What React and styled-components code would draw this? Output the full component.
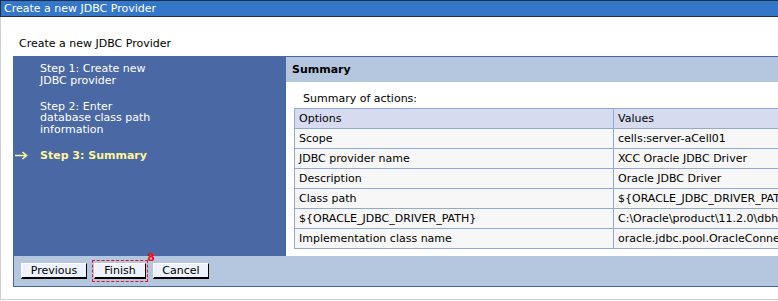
import React from 'react';
import styled, { createGlobalStyle } from 'styled-components';

const GlobalStyle = createGlobalStyle`
  html, body {
    margin: 0;
    padding: 0;
    background: #ffffff;
  }
  body {
    font-family: "DejaVu Sans", Verdana, sans-serif;
    font-size: 11px;
    color: #000000;
  }
`;

const steps = [
  { label: 'Step 1: Create new JDBC provider' },
  { label: 'Step 2: Enter database class path information' },
  { label: 'Step 3: Summary', current: true },
];

const rows = [
  ['Scope', 'cells:server-aCell01'],
  ['JDBC provider name', 'XCC Oracle JDBC Driver'],
  ['Description', 'Oracle JDBC Driver'],
  ['Class path', '${ORACLE_JDBC_DRIVER_PATH}/ojdbc6.jar'],
  ['${ORACLE_JDBC_DRIVER_PATH}', 'C:\\Oracle\\product\\11.2.0\\dbhome_1\\jdbc\\lib'],
  ['Implementation class name', 'oracle.jdbc.pool.OracleConnectionPoolDataSource'],
];

const Page = styled.div`
  width: 778px;
  height: 301px;
  overflow: hidden;
`;

const TitleBar = styled.div`
  height: 15px;
  line-height: 15px;
  padding-left: 3px;
  background: #3477c9;
  color: #ffffff;
  border: 1px solid #1d2f4a;
  border-right: none;
  white-space: nowrap;
`;

const Content = styled.div`
  height: 282px;
  border-left: 1px solid #cfcfcf;
  border-bottom: 1px solid #cfcfcf;
  padding-left: 12px;
`;

const PageHeading = styled.div`
  margin: 0 0 0 6px;
  padding-top: 20px;
  height: 19px;
  line-height: 13px;
`;

const Wizard = styled.div`
  display: flex;
  height: 200px;
  width: 900px;
`;

const StepNav = styled.div`
  width: 273px;
  flex: none;
  background: #4a69a4;
  padding-top: 7px;
  box-sizing: border-box;
  display: flex;
  flex-direction: column;
  gap: 14px;
`;

const Step = styled.div`
  display: flex;
  color: ${(p) => (p.$current ? '#fff59a' : '#ffffff')};
  font-weight: ${(p) => (p.$current ? 'bold' : 'normal')};
  line-height: 11.8px;
`;

const Marker = styled.div`
  width: 25px;
  padding-left: 2px;
  flex: none;
  display: flex;
  align-items: center;
`;

const StepLabel = styled.div`
  width: 114px;
`;

const Main = styled.div`
  flex: 1;
  background: #ffffff;
  border-top: 1px solid #4a69a4;
`;

const PanelHeader = styled.div`
  height: 25px;
  line-height: 25px;
  padding-left: 6px;
  background: #b5c7df;
  font-weight: bold;
`;

const Intro = styled.div`
  padding: 10px 0 0 17px;
  height: 16px;
  line-height: 13px;
`;

const Table = styled.table`
  margin-left: 8px;
  border-collapse: collapse;
  width: 560px;
  table-layout: fixed;
`;

const Cell = styled.td`
  border: 1px solid #8eaad9;
  height: 20px;
  padding: 0 4px;
  box-sizing: border-box;
  background: ${(p) => (p.$head ? '#d6dbef' : '#f7f7f7')};
  white-space: nowrap;
  overflow: hidden;
  width: ${(p) => (p.$first ? '319px' : 'auto')};
`;

const ButtonBar = styled.div`
  display: flex;
  align-items: center;
  gap: 5px;
  height: 31px;
  width: 900px;
  padding-left: 7px;
  box-sizing: border-box;
  background: #b5c7df;
  border-left: 1px solid #4a69a4;
  border-bottom: 1px solid #4a69a4;
`;

const Button = styled.button`
  font: inherit;
  height: 16px;
  width: ${(p) => p.$w}px;
  padding: 0;
  line-height: 13px;
  background: #eef2fd;
  color: #000000;
  border: 1px solid #ffffff;
  border-right-color: #000000;
  border-bottom: 2px solid #000000;
  border-radius: 0;
`;

const Highlight = styled.div`
  position: relative;
  padding: 2px 1px;
  border: 1px dashed #e8141e;
  display: flex;
`;

const Badge = styled.span`
  position: absolute;
  right: -8px;
  top: -9px;
  color: #f01010;
  font-weight: bold;
  font-size: 11px;
  line-height: 11px;
`;

const Arrow = () => (
  <svg width="13" height="9" viewBox="0 0 13 9">
    <path d="M0 4.5H11M7.5 1L11.5 4.5L7.5 8" fill="none" stroke="#fff59a" strokeWidth="1.6" />
  </svg>
);

export default function App() {
  return (
    <Page>
      <GlobalStyle />
      <TitleBar>Create a new JDBC Provider</TitleBar>
      <Content>
        <PageHeading>Create a new JDBC Provider</PageHeading>
        <Wizard>
          <StepNav>
            {steps.map((s) => (
              <Step key={s.label} $current={s.current}>
                <Marker>{s.current && <Arrow />}</Marker>
                <StepLabel>{s.label}</StepLabel>
              </Step>
            ))}
          </StepNav>
          <Main>
            <PanelHeader>Summary</PanelHeader>
            <Intro>Summary of actions:</Intro>
            <Table>
              <tbody>
                <tr>
                  <Cell $head $first>Options</Cell>
                  <Cell $head>Values</Cell>
                </tr>
                {rows.map(([k, v]) => (
                  <tr key={k}>
                    <Cell $first>{k}</Cell>
                    <Cell>{v}</Cell>
                  </tr>
                ))}
              </tbody>
            </Table>
          </Main>
        </Wizard>
        <ButtonBar>
          <Button $w={66}>Previous</Button>
          <Highlight>
            <Button $w={52}>Finish</Button>
            <Badge>8</Badge>
          </Highlight>
          <Button $w={56}>Cancel</Button>
        </ButtonBar>
      </Content>
    </Page>
  );
}
